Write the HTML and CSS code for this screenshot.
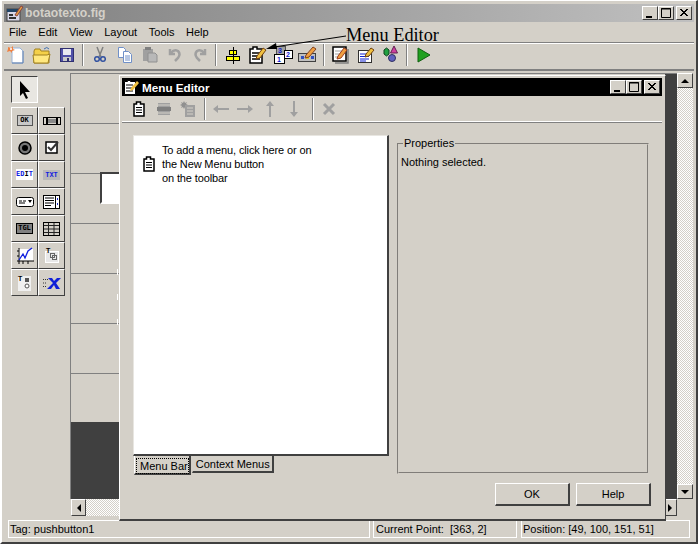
FILE: index.html
```html
<!DOCTYPE html>
<html lang="en">
<head>
<meta charset="utf-8">
<title>botaotexto.fig</title>
<link rel="stylesheet" href="styles.css">
</head>
<body>
<div class="window">
  <div class="titlebar">
    <svg class="title-icon" width="18" height="18" viewBox="0 0 18 18"><rect x="1" y="5" width="13" height="12" fill="#d8d8e8" stroke="#444"/><rect x="1" y="5" width="13" height="3" fill="#246"/><rect x="3" y="10" width="4" height="2" fill="#333"/><rect x="3" y="13" width="7" height="2" fill="#333"/><path d="M9 11l6-9 2 1-6 9z" fill="#e8a040" stroke="#844"/></svg>
    <span class="title-text">botaotexto.fig</span>
    <div class="caption-btns">
      <span class="cap"><svg width="16" height="14" viewBox="0 0 16 14"><rect x="4" y="10" width="6" height="2" fill="#000"/></svg></span>
      <span class="cap"><svg width="16" height="14" viewBox="0 0 16 14"><path d="M3.500 2.500h9v9h-9zM3 3h10" fill="none" stroke="#000"/></svg></span>
      <span class="cap cap-close"><svg width="16" height="14" viewBox="0 0 16 14"><path d="M4 3l7 7M5 3l7 7M11 3l-7 7M12 3l-7 7" stroke="#000"/></svg></span>
    </div>
  </div>
  <nav class="menubar"><span>File</span><span>Edit</span><span>View</span><span>Layout</span><span>Tools</span><span>Help</span></nav>
  <div class="toolbar">
    <span class="tb"><svg width="20" height="20" viewBox="0 0 20 20"><path d="M5 3h8l3 3v12H5z" fill="#fff" stroke="#9ab4d8"/><path d="M5 18h11V6" fill="none" stroke="#6080b0"/><path d="M1 2l3 1 2-2 0 3 2 1-3 1 0 2-2-2-3 1 1-3z" fill="#f08040"/><circle cx="4" cy="4" r="1" fill="#fff"/></svg></span>
    <span class="tb"><svg width="22" height="20" viewBox="0 0 22 20"><path d="M3 6l1-2h5l1 2h8v12H3z" fill="#f4d048" stroke="#a08020"/><path d="M2 10h14l3-1-2 9H3z" fill="#ffe880" stroke="#a08020"/><path d="M13 4q3-3 5 0" fill="none" stroke="#4070b0"/></svg></span>
    <span class="tb"><svg width="16" height="16" viewBox="0 0 16 16"><rect x="1.500" y="1.500" width="13" height="13" fill="#5050a8" stroke="#303070"/><rect x="4" y="2" width="8" height="6" fill="#e8e8f0"/><rect x="4" y="10" width="8" height="4" fill="#c8c8c8"/><rect x="8" y="11" width="2" height="3" fill="#303070"/></svg></span>
    <i class="sep"></i>
    <span class="tb"><svg width="12" height="17" viewBox="0 0 12 17"><path d="M3 1l4 10M9 1L5 11" stroke="#808080" stroke-width="1.500"/><circle cx="3" cy="13" r="2.300" fill="none" stroke="#3050a0" stroke-width="1.500"/><circle cx="9" cy="13" r="2.300" fill="none" stroke="#3050a0" stroke-width="1.500"/></svg></span>
    <span class="tb"><svg width="16" height="16" viewBox="0 0 16 16"><path d="M1.500 .5h5l2 2v8h-7z" fill="#fff" stroke="#7090c8"/><path d="M6.500 4.500h5l3 3v8h-8z" fill="#fff" stroke="#7090c8"/><path d="M8 9h5M8 11h5M8 13h5" stroke="#7090c8"/></svg></span>
    <span class="tb"><svg width="16" height="16" viewBox="0 0 16 16"><path d="M1 2h10v12H1z" fill="#a0a0a0"/><rect x="3" y="0" width="6" height="3" fill="#808080"/><path d="M6 6h7l2 2v7H6z" fill="#b8b8b8" stroke="#909090"/></svg></span>
    <span class="tb"><svg width="14" height="14" viewBox="0 0 14 14"><path d="M2 1v5h5" fill="none" stroke="#a0a0a0" stroke-width="2.500"/><path d="M3 5q3-4 7-2 3 3 0 7l-3 3" fill="none" stroke="#a0a0a0" stroke-width="2.500"/></svg></span>
    <span class="tb"><svg width="14" height="14" viewBox="0 0 14 14"><path d="M12 1v5H7" fill="none" stroke="#a0a0a0" stroke-width="2.500"/><path d="M11 5Q8 1 4 3q-3 3 0 7l3 3" fill="none" stroke="#a0a0a0" stroke-width="2.500"/></svg></span>
    <i class="sep"></i>
    <span class="tb"><svg width="18" height="18" viewBox="0 0 18 18"><rect x="5.500" y="4.500" width="7" height="4" fill="#ffff00" stroke="#000"/><rect x="2.500" y="10.500" width="13" height="4" fill="#ffff00" stroke="#000"/><path d="M9.500 1v17" stroke="#000"/></svg></span>
    <span class="tb"><svg width="18" height="18" viewBox="0 0 18 18"><path d="M1 3h3V1h4v2h5v14H1z" fill="#fff" stroke="#000" stroke-width="1.500"/><path d="M3 7h8M3 10h8M3 13h8" stroke="#000" stroke-width="1.400"/><path d="M8 10l6-8 3 2-6 8-4 1z" fill="#f0c040" stroke="#704010"/></svg></span>
    <span class="tb"><svg width="20" height="20" viewBox="0 0 20 20"><rect x="3.500" y="1.500" width="9" height="8" fill="#a0a0a0" stroke="#505050"/><text x="5" y="8" class="t7 blue">3</text><rect x="11.500" y="5.500" width="8" height="8" fill="#fff" stroke="#000"/><text x="13" y="12" class="t7 blue">2</text><rect x="1.500" y="9.500" width="10" height="9" fill="#fff" stroke="#000"/><text x="4" y="17" class="t7 blue">1</text></svg></span>
    <span class="tb"><svg width="20" height="18" viewBox="0 0 20 18"><rect x=".5" y="7.500" width="17" height="8" fill="#c0c0c0" stroke="#404040"/><rect x="3" y="10" width="3" height="3" fill="#3050c0"/><rect x="8" y="10" width="3" height="3" fill="#e0c020"/><rect x="13" y="10" width="3" height="3" fill="#3050c0"/><path d="M8 9l7-8 3 2-7 8-4 1z" fill="#f0a040" stroke="#804020"/></svg></span>
    <i class="sep"></i>
    <span class="tb"><svg width="18" height="18" viewBox="0 0 18 18"><path d="M1 1h13v14H1z" fill="#fff" stroke="#000" stroke-width="1.500"/><path d="M16 3v14H3" fill="none" stroke="#808080" stroke-width="1.500"/><path d="M3 5h8M3 8h8M3 11h6" stroke="#a0a0a0"/><path d="M6 10l6-8 3 2-6 8-4 1z" fill="#f0a040" stroke="#a04020"/></svg></span>
    <span class="tb"><svg width="18" height="18" viewBox="0 0 18 18"><rect x="1.500" y="4.500" width="13" height="12" fill="#fff" stroke="#303030"/><path d="M3 8h7M3 10.500h9M3 13h9M3 15h6" stroke="#1020d0"/><path d="M9 8l5-6 3 2-5 6-4 1z" fill="#f0c040" stroke="#704010"/></svg></span>
    <span class="tb"><svg width="16" height="18" viewBox="0 0 16 18"><path d="M1 4l2.500-2L6 4v4l-2.500 2L1 8z" fill="#20a040" stroke="#104020"/><path d="M11 0l3.500 7h-7z" fill="#d040a0" stroke="#602050"/><circle cx="9" cy="12" r="3.500" fill="#6060c0" stroke="#303060"/></svg></span>
    <i class="sep"></i>
    <span class="tb"><svg width="14" height="16" viewBox="0 0 14 16"><path d="M1 1L13 8 1 15z" fill="#20a020" stroke="#106010"/></svg></span>
  </div>

  <div class="main">
    <div class="palette">
      <button class="pal pal-select"><svg width="14" height="20" viewBox="0 0 14 20"><path d="M2 1v15l3-3 3 6 2-1-3-6h5z" fill="#000"/></svg></button>
      <div class="pal-grid">
        <span class="pal"><span class="mini mini-ok">OK</span></span>
        <span class="pal"><svg width="18" height="8" viewBox="0 0 18 8"><rect x=".5" y=".5" width="17" height="7" fill="#d4d0c8" stroke="#000"/><path d="M4 0v8M14 0v8" stroke="#000" stroke-width="2"/><rect x="5" y="2" width="8" height="4" fill="#888"/></svg></span>
        <span class="pal"><svg width="14" height="14" viewBox="0 0 14 14"><circle cx="7" cy="7" r="6" fill="#777" stroke="#000" stroke-width="1.500"/><circle cx="7" cy="7" r="3" fill="#000"/></svg></span>
        <span class="pal"><svg width="14" height="14" viewBox="0 0 14 14"><rect x="1" y="1" width="11" height="11" fill="#fff" stroke="#000" stroke-width="1.500"/><path d="M3 6l3 3 7-8" fill="none" stroke="#333" stroke-width="2"/></svg></span>
        <span class="pal"><span class="mini mini-edit">ED<b>I</b>T</span></span>
        <span class="pal"><span class="mini mini-txt">TXT</span></span>
        <span class="pal"><svg width="18" height="10" viewBox="0 0 18 10"><rect x=".5" y=".5" width="17" height="9" rx="2" fill="#fff" stroke="#000"/><path d="M3 4h3M7 4h3M3 6h6" stroke="#000"/><path d="M12 3h4l-2 3z" fill="#000"/></svg></span>
        <span class="pal"><svg width="17" height="14" viewBox="0 0 17 14"><rect x=".5" y=".5" width="16" height="13" fill="#fff" stroke="#000"/><path d="M2 3h9M2 5.500h9M2 8h9M2 10.500h6" stroke="#000"/><rect x="12" y="1" width="1" height="12" fill="#000"/><path d="M14.500 3v2M14.500 8v2" stroke="#2030d0"/></svg></span>
        <span class="pal"><span class="mini mini-tgl">TGL</span></span>
        <span class="pal"><svg width="17" height="14" viewBox="0 0 17 14"><rect x=".5" y=".5" width="16" height="13" fill="#d4d0c8" stroke="#000"/><path d="M1 3.500h15M1 7h15M1 10.500h15M5.500 1v12M11 1v12" stroke="#222"/></svg></span>
        <span class="pal"><svg width="18" height="18" viewBox="0 0 18 18"><rect x="2" y="2" width="15" height="12" fill="#fff"/><path d="M3 1v16M1 14h17M1 4h2M1 9h2M7 14v3M12 14v3" stroke="#000"/><path d="M3 13l4-6 2 4 3-7 4-3" fill="none" stroke="#1020e0" stroke-width="1.300"/></svg></span>
        <span class="pal"><svg width="17" height="17" viewBox="0 0 17 17"><rect x="2.500" y="4.500" width="13" height="11" fill="#e8e8e8" stroke="#fff"/><text x="3" y="6" class="t7 black">T</text><rect x="7.500" y="6.500" width="4" height="4" fill="none" stroke="#666"/><rect x="9.500" y="8.500" width="4" height="4" fill="none" stroke="#666"/></svg></span>
        <span class="pal"><svg width="17" height="18" viewBox="0 0 17 18"><rect x="2" y="2" width="13" height="15" fill="#f0f0f0"/><text x="2" y="7" class="t7 black">T</text><rect x="9" y="4" width="4" height="4" fill="#555"/><circle cx="11" cy="12" r="2" fill="#fff" stroke="#555"/></svg></span>
        <span class="pal"><svg width="18" height="12" viewBox="0 0 18 12"><path d="M0 2.500h5M0 6h4M0 9.500h4" stroke="#333" stroke-dasharray="1 1"/><path d="M5 1h4l2 3 3-3h4l-5 5 4 6h-4l-2-4-3 4H4l6-6z" fill="#1020d8"/></svg></span>
      </div>
    </div>
    <div class="canvas">
      <div class="canvas-area">
        <div class="grid-lines"></div>
        <div class="component"></div>
        <i class="tick tick-a"></i><i class="tick tick-b"></i><i class="tick tick-c"></i>
        <div class="strip"></div>
      </div>
      <div class="hscroll">
        <span class="sb-btn"><i class="arr arr-l"></i></span>
        <span class="dither"></span>
        <span class="sb-btn"><i class="arr arr-r"></i></span>
      </div>
    </div>
    <div class="vscroll">
      <span class="sb-btn sb-v"><i class="arr arr-u"></i></span>
      <span class="dither"></span>
      <span class="sb-btn sb-v"><i class="arr arr-d"></i></span>
    </div>
  </div>

  <div class="status">
    <span class="st st-tag">Tag: pushbutton1</span>
    <span class="st st-point">Current Point:&nbsp; [363, 2]</span>
    <span class="st st-pos">Position: [49, 100, 151, 51]</span>
  </div>
</div>

<section class="dialog">
  <div class="dlg-title">
    <svg width="16" height="16" viewBox="0 0 16 16"><path d="M.5 2.500h3v-1h3v1h5v13H.5z" fill="#fff" stroke="#000"/><path d="M2 6h7M2 9h7M2 12h7" stroke="#000"/><path d="M7 9l6-7 2 2-6 7-3 1z" fill="#f0c040"/></svg>
    <span class="dlg-title-text">Menu Editor</span>
    <div class="caption-btns">
      <span class="cap"><svg width="16" height="14" viewBox="0 0 16 14"><rect x="4" y="10" width="6" height="2" fill="#000"/></svg></span>
      <span class="cap"><svg width="16" height="14" viewBox="0 0 16 14"><path d="M3.500 2.500h9v9h-9zM3 3h10" fill="none" stroke="#000"/></svg></span>
      <span class="cap cap-close"><svg width="16" height="14" viewBox="0 0 16 14"><path d="M4 3l7 7M5 3l7 7M11 3l-7 7M12 3l-7 7" stroke="#000"/></svg></span>
    </div>
  </div>
  <div class="dlg-toolbar">
    <span class="dt"><svg width="12" height="16" viewBox="0 0 12 16"><path d="M1 3h2.500V1h4v2H11v12H1z" fill="#fff" stroke="#000" stroke-width="1.500"/><path d="M3 6.500h6M3 9h6M3 11.500h6" stroke="#000" stroke-width="1.200"/></svg></span>
    <span class="dt"><svg width="14" height="14" viewBox="0 0 14 14"><rect x="1" y="1" width="12" height="12" fill="#a0a0a0"/><path d="M1 3h12M1 11h12" stroke="#d4d0c8"/><rect x="0" y="5" width="14" height="4" fill="#808080"/></svg></span>
    <span class="dt"><svg width="16" height="16" viewBox="0 0 16 16"><path d="M1 1l2 1 1-2 1 2 2-1-1 2 2 1-2 1 1 2-2-1-1 2-1-2-2 1 1-2-2-1 2-1z" fill="#909090"/><rect x="5" y="4" width="10" height="12" fill="#a0a0a0"/><path d="M7 7h6M7 10h6M7 13h6" stroke="#d4d0c8"/></svg></span>
    <i class="sep sep-a"></i>
    <span class="dt"><svg width="16" height="10" viewBox="0 0 16 10"><path d="M0 5l5-4v3h11v2H5v3z" fill="#a0a0a0"/></svg></span>
    <span class="dt"><svg width="16" height="10" viewBox="0 0 16 10"><path d="M16 5l-5-4v3H0v2h11v3z" fill="#a0a0a0"/></svg></span>
    <span class="dt"><svg width="10" height="16" viewBox="0 0 10 16"><path d="M5 0l4 5H6v11H4V5H1z" fill="#a0a0a0"/></svg></span>
    <span class="dt"><svg width="10" height="16" viewBox="0 0 10 16"><path d="M5 16l4-5H6V0H4v11H1z" fill="#a0a0a0"/></svg></span>
    <i class="sep sep-b"></i>
    <span class="dt"><svg width="14" height="14" viewBox="0 0 14 14"><path d="M2 2l10 10M12 2L2 12" stroke="#a0a0a0" stroke-width="3"/></svg></span>
  </div>
  <div class="dlg-body">
    <div class="left-col">
      <div class="list-panel">
        <svg class="hint-icon" width="12" height="16" viewBox="0 0 12 16"><path d="M1 3h2.500V1h4v2H11v12H1z" fill="#fff" stroke="#000" stroke-width="1.500"/><path d="M3 6.500h6M3 9h6M3 11.500h6" stroke="#000" stroke-width="1.200"/></svg>
        <p class="hint">To add a menu, click here or on<br>the New Menu button<br>on the toolbar</p>
      </div>
      <div class="tabs"><span class="tab tab-on"><span class="tab-focus">Menu Bar</span></span><span class="tab">Context Menus</span></div>
    </div>
    <div class="right-col">
      <fieldset class="props">
        <legend>Properties</legend>
        <p>Nothing selected.</p>
      </fieldset>
    </div>
  </div>
  <div class="dlg-actions">
    <button class="btn">OK</button>
    <button class="btn">Help</button>
  </div>
</section>

<div class="annotation">Menu Editor</div>
<svg class="anno-arrow" width="84" height="16" viewBox="0 0 84 16"><path d="M80 1L8 12" stroke="#000"/><path d="M0 14l10-6 1 6z" fill="#000"/></svg>
</body>
</html>
```

FILE: styles.css
```css
* { box-sizing: border-box; }
html, body { margin: 0; padding: 0; }
body {
  width: 698px;
  height: 544px;
  overflow: hidden;
  position: relative;
  background: #d4d0c8;
  font: 11px "Liberation Sans", Arial, sans-serif;
  color: #000;
}
.window {
  width: 698px;
  height: 544px;
  display: flex;
  flex-direction: column;
  padding: 3px 3px 4px 3px;
  border-top: 1px solid #fff;
  border-left: 2px solid #fff;
  border-right: 2px solid #404040;
  border-bottom: 2px solid #404040;
}
.titlebar {
  height: 18px;
  flex: none;
  display: flex;
  align-items: center;
  margin: 0 -1px;
  padding: 0 2px;
  background: linear-gradient(90deg, #808080, #c0c0c0);
}
.title-icon { flex: none; }
.title-text {
  margin-left: 1px;
  font: bold 12.200px "Liberation Sans", sans-serif;
  color: #d4d0c8;
}
.caption-btns { margin-left: auto; display: flex; }
.cap {
  width: 16px;
  height: 14px;
  background: #d4d0c8;
  border: 1px solid;
  border-color: #fff #404040 #404040 #fff;
  display: block;
  overflow: hidden;
}
.cap svg { display: block; margin: -1px; }
.cap-close { margin-left: 2px; }
.menubar {
  height: 20px;
  flex: none;
  display: flex;
  align-items: center;
  gap: 11.600px;
  padding-left: 4px;
}
.toolbar {
  height: 29px;
  flex: none;
  display: flex;
  align-items: center;
  margin: 0 -1px;
  padding-bottom: 3px;
  border-top: 1px solid #808080;
  border-bottom: 2px solid #808080;
  box-shadow: inset 0 1px 0 #fff;
}
.tb {
  width: 25px;
  height: 22px;
  flex: none;
  display: flex;
  align-items: center;
  justify-content: center;
}
.tb svg, .dt svg { display: block; }
.sep {
  width: 2px;
  height: 22px;
  flex: none;
  margin: 0 3px;
  background: #808080;
  border-right: 1px solid #fff;
}
.main {
  flex: 1;
  min-height: 0;
  display: flex;
}
.palette {
  width: 65px;
  flex: none;
  padding: 5px 0 0 6px;
}
.pal {
  width: 27px;
  height: 27px;
  padding: 0;
  display: flex;
  align-items: center;
  justify-content: center;
  background: #d4d0c8;
  border: 1px solid;
  border-color: #fff #404040 #404040 #fff;
}
.pal-select {
  background: #e8e6e1;
  border-color: #404040 #fff #fff #404040;
  margin-bottom: 4px;
}
.pal-grid {
  width: 54px;
  display: grid;
  grid-template-columns: 27px 27px;
  grid-auto-rows: 27px;
}
.mini {
  font: bold 7px/10px "DejaVu Sans Mono", monospace;
  display: block;
  text-align: center;
}
.mini-ok { width: 16px; background: #c8c8c8; border: 1px solid #555; line-height: 9px; color: #000; }
.mini-edit { width: 17px; background: #fff; color: #1020e0; height: 11px; }
.mini-edit b { color: #000; }
.mini-txt { width: 17px; background: #b8b8b8; color: #1020e0; height: 10px; }
.mini-tgl { width: 17px; background: #808080; border: 1px solid #000; color: #000; line-height: 9px; }
.canvas {
  flex: 1;
  min-width: 0;
  display: flex;
  flex-direction: column;
  margin-top: 2px;
  height: 443px;
}
.canvas-area {
  flex: 1;
  position: relative;
  border-left: 1px solid #808080;
  border-top: 1px solid #808080;
  background: linear-gradient(#d4d0c8 348px, #404040 348px) no-repeat;
}
.grid-lines {
  position: absolute;
  left: 0;
  top: 49px;
  width: 100%;
  height: 251px;
  background: repeating-linear-gradient(#808080 0 1px, transparent 1px 50px);
}
.component {
  position: absolute;
  left: 29px;
  top: 98px;
  width: 30px;
  height: 32px;
  background: #fff;
  border: 2px solid;
  border-color: #404040 #fff #fff #404040;
}
.tick { position: absolute; left: 46px; width: 1px; height: 6px; background: #fff; }
.tick-a { top: 195px; }
.tick-b { top: 220px; }
.tick-c { top: 245px; }
.strip { position: absolute; top: 0; right: 0; bottom: 0; width: 12px; background: #404040; }
.hscroll { height: 17px; flex: none; display: flex; margin-left: 1px; }
.dither {
  flex: 1;
  background: conic-gradient(#d4d0c8 25%, #fff 0 50%, #d4d0c8 0 75%, #fff 0) 0 0 / 2px 2px;
}
.sb-btn {
  width: 15px;
  height: 17px;
  flex: none;
  display: flex;
  align-items: center;
  justify-content: center;
  background: #d4d0c8;
  border: 1px solid;
  border-color: #fff #404040 #404040 #fff;
}
.sb-v { height: 15px; width: 16px; }
.arr { display: block; width: 0; height: 0; border: 4px solid transparent; }
.arr-l { border-right-color: #000; border-left-width: 0; }
.arr-r { border-left-color: #000; border-right-width: 0; }
.arr-u { border-bottom-color: #000; border-top-width: 0; }
.arr-d { border-top-color: #000; border-bottom-width: 0; }
.vscroll {
  width: 16px;
  flex: none;
  height: 426px;
  margin-top: 2px;
  display: flex;
  flex-direction: column;
}
.status {
  height: 18px;
  flex: none;
  margin-top: 3px;
  display: flex;
  padding-left: 3px;
  gap: 3px;
}
.st {
  display: block;
  padding-left: 1px;
  line-height: 16px;
  border: 1px solid #fff;
  white-space: nowrap;
}
.st-tag { width: 362px; }
.st-point { width: 144px; padding-left: 2px; }
.st-pos { width: 169px; margin-left: 1px; }

.dialog {
  position: absolute;
  left: 119px;
  top: 75px;
  width: 547px;
  height: 446px;
  display: flex;
  flex-direction: column;
  background: #d4d0c8;
  padding: 2px 3px 0 2px;
  border-left: 1px solid #fff;
  border-top: 1px solid #fff;
  border-right: 1px solid #404040;
  border-bottom: 2px solid #404040;
}
.dlg-title {
  height: 18px;
  flex: none;
  background: #000;
  display: flex;
  align-items: center;
  padding: 0 2px;
}
.dlg-title-text {
  margin-left: 2px;
  color: #fff;
  font: bold 11.700px "Liberation Sans", sans-serif;
}
.dlg-toolbar {
  height: 27px;
  flex: none;
  display: flex;
  align-items: center;
  padding-left: 5px;
  border-bottom: 1px solid #808080;
  box-shadow: inset 0 -1px 0 #fff;
}
.dt {
  width: 24.500px;
  flex: none;
  display: flex;
  justify-content: center;
}
.sep-b { margin: 0 3px 0 5px; }
.dlg-body {
  flex: 1;
  min-height: 0;
  display: flex;
  padding: 12px 0 0 11px;
  gap: 8px;
}
.left-col { width: 256px; flex: none; display: flex; flex-direction: column; }
.list-panel {
  height: 321px;
  flex: none;
  background: #fff;
  border: 1px solid;
  border-color: #e8e6e1 #404040 #404040 #e8e6e1;
  border-width: 1px 2px 2px 1px;
  display: flex;
  align-items: flex-start;
  padding: 7px 0 0 9px;
}
.hint-icon { margin-top: 13px; flex: none; }
.hint { margin: 0 0 0 7px; line-height: 14px; letter-spacing: -0.130px; }
.tabs { display: flex; align-items: flex-start; padding-left: 1px; }
.tab {
  height: 17px;
  padding: 1px 2px 0 3px;
  line-height: 14px;
  border: 1px solid;
  border-color: transparent #404040 #404040 #d4d0c8;
  border-width: 0 2px 2px 1px;
  white-space: nowrap;
}
.tab-on {
  height: 19px;
  padding: 2px 0 0 1px;
  border-left-color: #fff;
  margin-right: 1px;
}
.tab-focus { display: block; padding: 1px 1px 1px 4px; line-height: 14px; outline: 1px dotted #000; outline-offset: -1px; }
.right-col { width: 252px; flex: none; }
.props {
  margin: 2px 0 0;
  height: 337px;
  padding: 3px 2px;
  border: 2px groove #d4d0c8;
  min-width: 0;
}
.props legend { padding: 0 1px; margin-left: 2px; line-height: 13px; }
.props p { margin: 2px 0 0; line-height: 14px; }
.dlg-actions {
  height: 46px;
  flex: none;
  display: flex;
  justify-content: flex-end;
  gap: 6px;
  padding: 10px 11px 0 0;
}
.btn {
  width: 75px;
  height: 23px;
  padding: 0;
  background: #d4d0c8;
  font: 11px "Liberation Sans", sans-serif;
  color: #000;
  border: 1px solid;
  border-color: #fff #404040 #404040 #fff;
  border-width: 1px 2px 2px 1px;
}
.annotation {
  position: absolute;
  left: 346px;
  top: 23px;
  font: 18.300px/24px "Liberation Serif", serif;
  color: #000;
  white-space: nowrap;
}
.anno-arrow { position: absolute; left: 266px; top: 35px; }
.t7 { font: bold 7px "Liberation Sans", sans-serif; }
.blue { fill: #1020d0; }
.black { fill: #000; }
```
